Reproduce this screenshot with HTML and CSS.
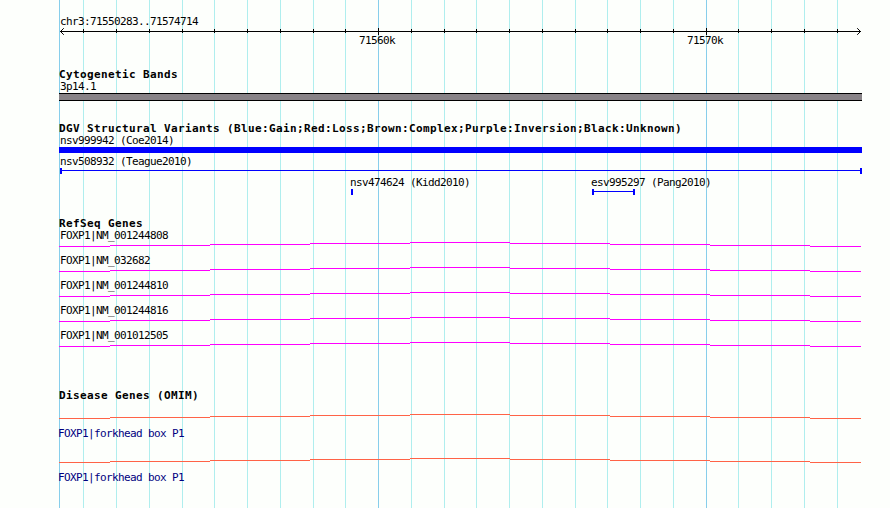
FILE: index.html
```
<!DOCTYPE html>
<html lang="en">
<head>
    <meta charset="UTF-8">
    <meta name="viewport" content="width=device-width, initial-scale=1.0">
    <title>chr3:71550283..71574714</title>
    <link rel="stylesheet" href="styles.css">
</head>
<body>

<!-- Grid lines behind all tracks -->
<svg class="gridlines" width="890" height="508" shape-rendering="crispEdges">
    <path class="minor" d="M83.5 0V508M116.5 0V508M149.5 0V508M182.5 0V508M214.5 0V508M247.5 0V508M280.5 0V508M313.5 0V508M345.5 0V508M411.5 0V508M444.5 0V508M476.5 0V508M509.5 0V508M542.5 0V508M575.5 0V508M607.5 0V508M640.5 0V508M673.5 0V508M738.5 0V508M771.5 0V508M804.5 0V508M837.5 0V508"/>
    <path class="major" d="M59.5 0V508M378.5 0V508M706.5 0V508"/>
</svg>

<!-- Stepped intron line shared by the gene tracks -->
<svg class="defs" width="0" height="0">
    <symbol id="intron" viewBox="0 0 803 5">
        <path d="M0 4.5H51M51 3.5H151M151 2.5H251M251 1.5H351M351 .5H451M451 1.5H551M551 2.5H651M651 3.5H751M751 4.5H802"/>
    </symbol>
</svg>

<div class="browser">
    <!-- Scale -->
    <div class="scale">
        <div class="label">chr3:71550283..71574714</div>
        <svg class="axis" width="803" height="7" shape-rendering="crispEdges">
            <path d="M1 4.5H802M24.5 2V6M57.5 2V6M90.5 2V6M123.5 2V6M155.5 2V6M188.5 2V6M221.5 2V6M254.5 2V6M286.5 2V6M319.5 1V8M352.5 2V6M385.5 2V6M417.5 2V6M450.5 2V6M483.5 2V6M516.5 2V6M548.5 2V6M581.5 2V6M614.5 2V6M647.5 1V8M679.5 2V6M712.5 2V6M745.5 2V6M778.5 2V6"/>
            <path shape-rendering="auto" d="M4.8 1.2L1.5 4.5L4.8 7.8M798.2 1.2L801.5 4.5L798.2 7.8"/>
        </svg>
        <div class="ticks">
            <span class="label">71560k</span>
            <span class="label">71570k</span>
        </div>
    </div>

    <div class="track cyto">
        <h2>Cytogenetic Bands</h2>
        <div class="label">3p14.1</div>
        <div class="band"></div>
    </div>

    <div class="track variants">
        <h2>DGV Structural Variants (Blue:Gain;Red:Loss;Brown:Complex;Purple:Inversion;Black:Unknown)</h2>
        <div class="label">nsv999942 (Coe2014)</div>
        <div class="gain"></div>
        <div class="label">nsv508932 (Teague2010)</div>
        <div class="span full"></div>
        <div class="variant-row">
            <div class="variant kidd">
                <div class="label">nsv474624 (Kidd2010)</div>
                <div class="span"></div>
            </div>
            <div class="variant">
                <div class="label">esv995297 (Pang2010)</div>
                <div class="span pang"></div>
            </div>
        </div>
    </div>

    <div class="track refseq">
        <h2>RefSeq Genes</h2>
        <div class="gene">
            <div class="label">FOXP1|NM_001244808</div>
            <svg class="intron"><use href="#intron"/></svg>
        </div>
        <div class="gene">
            <div class="label">FOXP1|NM_032682</div>
            <svg class="intron"><use href="#intron"/></svg>
        </div>
        <div class="gene">
            <div class="label">FOXP1|NM_001244810</div>
            <svg class="intron"><use href="#intron"/></svg>
        </div>
        <div class="gene">
            <div class="label">FOXP1|NM_001244816</div>
            <svg class="intron"><use href="#intron"/></svg>
        </div>
        <div class="gene">
            <div class="label">FOXP1|NM_001012505</div>
            <svg class="intron"><use href="#intron"/></svg>
        </div>
    </div>

    <div class="track omim">
        <h2>Disease Genes (OMIM)</h2>
        <div class="gene">
            <svg class="intron"><use href="#intron"/></svg>
            <div class="label">FOXP1|forkhead box P1</div>
        </div>
        <div class="gene">
            <svg class="intron"><use href="#intron"/></svg>
            <div class="label">FOXP1|forkhead box P1</div>
        </div>
    </div>
</div>

</body>
</html>
```
FILE: styles.css
```
body {
    margin: 0;
    height: 508px;
    overflow: hidden;
    background-color: #fdfffc;
    color: #000;
    font-family: "DejaVu Sans Mono", "Liberation Mono", monospace;
}

svg {
    display: block;
}

.gridlines {
    position: absolute;
    top: 0;
    left: 0;
    z-index: -1;
}

.minor {
    stroke: #afeeee;
}

.major {
    stroke: #87ceeb;
}

.defs {
    position: absolute;
}

.browser {
    width: 803px;
    padding: 15px 0 0 59px;
}

.label {
    height: 12px;
    padding-left: 1px;
    font-size: 11px;
    line-height: 14px;
    letter-spacing: -0.622px;
    white-space: pre;
}

h2 {
    height: 12px;
    margin: 0;
    font-size: 11px;
    line-height: 14px;
    letter-spacing: 0.378px;
    white-space: pre;
}

/* scale */
.axis {
    overflow: visible;
    fill: none;
    stroke: #000;
}

.ticks {
    display: flex;
    gap: 291px;
    padding-left: 299px;
}

/* cytogenetic bands */
.cyto {
    margin-top: 22px;
}

.band {
    height: 6px;
    margin-top: 1px;
    border: solid #000;
    border-width: 1px 0;
    background-color: #888387;
}

/* structural variants */
.variants {
    margin-top: 21px;
}

.gain {
    height: 6px;
    margin: 1px 0 2px;
    background-color: #00f;
}

.span {
    width: 2px;
    height: 6px;
    margin: 1px 0 0 1px;
    box-sizing: border-box;
    border: solid #00f;
    border-width: 0 2px 0 0;
    background: linear-gradient(#00f, #00f) 0 2px / 100% 1px no-repeat;
}

.full {
    width: 802px;
    border-left-width: 2px;
}

.pang {
    width: 43px;
    border-left-width: 2px;
}

.variant-row {
    display: flex;
    margin-top: 2px;
    padding-left: 291px;
}

.variant .label {
    padding-left: 0;
}

.kidd {
    width: 241px;
}

/* genes */
.refseq {
    margin-top: 22px;
}

.intron {
    width: 803px;
    height: 5px;
    stroke: #f0f;
    shape-rendering: crispEdges;
}

.refseq .gene {
    height: 25px;
}

.refseq .intron {
    margin-top: 1px;
}

.omim {
    margin-top: 35px;
}

.omim .gene {
    height: 31px;
    padding-top: 13px;
}

.omim .intron {
    stroke: #ff6347;
}

.omim .label {
    margin: 8px 0 0 -1px;
    padding: 0;
    color: #000080;
}
```
